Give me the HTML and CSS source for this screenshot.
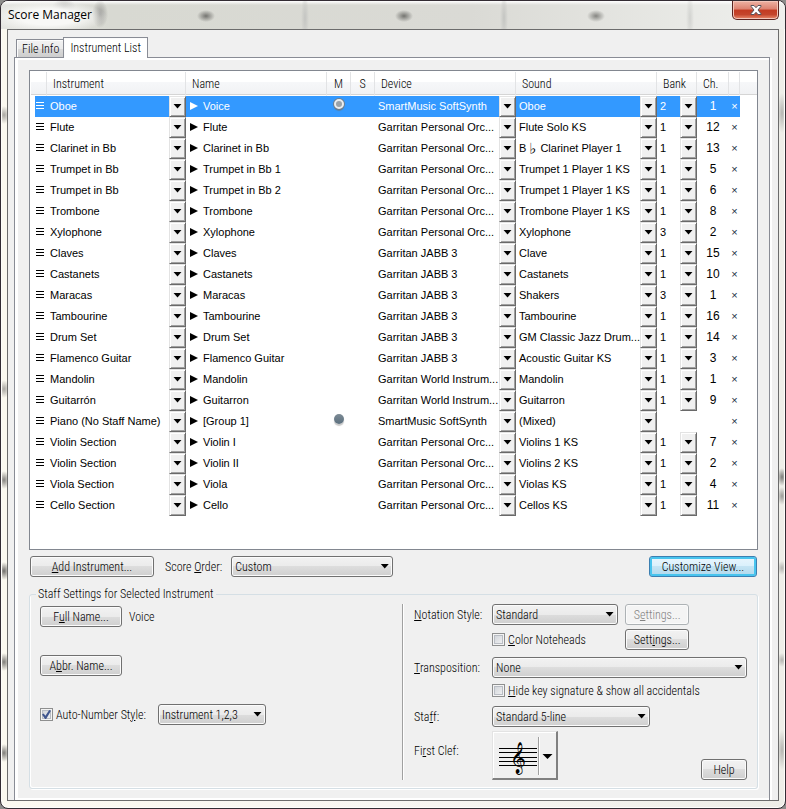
FILE: index.html
```html
<!DOCTYPE html>
<html lang="en">
<head>
<meta charset="utf-8">
<title>Score Manager</title>
<link rel="stylesheet" href="styles.css">
</head>
<body>
<div class="window">
  <header class="titlebar">
    <h1>Score Manager</h1>
    <button class="close" type="button" aria-label="Close">
      <svg width="12" height="12" viewBox="0 0 12 12"><path d="M1 1.5h3l2 2.2 2-2.2h3v.8L8 6l3 3.7v.8H8L6 8.3 4 10.500H1v-.8L4 6 1 2.300z" fill="#fff" stroke="#56545c" stroke-width="1"/></svg>
    </button>
  </header>

  <main class="client">
    <nav class="tabs" role="tablist">
      <button class="tab" type="button" role="tab">File Info</button>
      <button class="tab active" type="button" role="tab" aria-selected="true">Instrument List</button>
    </nav>

    <div class="page">
      <div class="list">
        <table>
          <colgroup>
            <col class="c-grip"><col class="c-inst"><col><col class="c-flag"><col class="c-flag"><col class="c-wide"><col class="c-wide"><col class="c-bank"><col class="c-ch"><col class="c-del"><col class="c-end">
          </colgroup>
          <thead>
            <tr><th></th><th>Instrument</th><th>Name</th><th class="mid">M</th><th class="mid">S</th><th>Device</th><th>Sound</th><th>Bank</th><th>Ch.</th><th></th><th></th></tr>
          </thead>
          <tbody id="rows"></tbody>
        </table>
      </div>

      <div class="actions">
        <button class="btn add" type="button"><u>A</u>dd Instrument...</button>
        <label for="order">Score <u>O</u>rder:</label>
        <span class="combo order"><select id="order"><option>Custom</option></select></span>
        <button class="btn customize" type="button">Customize View...</button>
      </div>

      <fieldset>
        <legend>Staff Settings for Selected Instrument</legend>
        <div class="columns">
          <div class="left">
            <div class="line"><button class="btn name" type="button">F<u>u</u>ll Name...</button><span class="value">Voice</span></div>
            <div class="line"><button class="btn name" type="button">A<u>b</u>br. Name...</button></div>
            <div class="line">
              <label class="check auto"><input type="checkbox" checked><span>Auto-Number St<u>y</u>le:</span></label>
              <span class="combo numbering"><select aria-label="Auto-Number Style"><option>Instrument 1,2,3</option></select></span>
            </div>
          </div>

          <div class="right">
            <div class="group">
              <label for="notation"><u>N</u>otation Style:</label>
              <div class="pair">
                <span class="combo"><select id="notation"><option>Standard</option></select></span>
                <button class="btn" type="button" disabled>S<u>e</u>ttings...</button>
              </div>
              <div class="pair field">
                <label class="check"><input type="checkbox"><span><u>C</u>olor Noteheads</span></label>
                <button class="btn" type="button">Sett<u>i</u>ngs...</button>
              </div>
            </div>
            <div class="group">
              <label for="transposition"><u>T</u>ransposition:</label>
              <span class="combo"><select id="transposition"><option>None</option></select></span>
              <label class="check field"><input type="checkbox"><span><u>H</u>ide key signature &amp; show all accidentals</span></label>
            </div>
            <div class="group">
              <label for="staff">Sta<u>f</u>f:</label>
              <span class="combo staff"><select id="staff"><option>Standard 5-line</option></select></span>
              <label class="clef-label" for="clef">Fi<u>r</u>st Clef:</label>
              <div class="clef-row">
                <button class="clef" id="clef" type="button">
                  <svg width="62" height="46" viewBox="493 732 62 46">
                    <path d="M499 748.5h38M499 752.500h38M499 757.500h38M499 761.500h38M499 765.500h38" stroke="#000"/>
                    <text class="glyph" x="518" y="767" text-anchor="middle">&#x1D11E;</text>
                    <path d="M538.500 737v38" stroke="#a0a0a0"/><path d="M539.500 737v38" stroke="#fff"/>
                    <path d="M542.500 754h10l-5 5z"/>
                  </svg>
                </button>
                <button class="btn help" type="button">Help</button>
              </div>
            </div>
          </div>
        </div>
      </fieldset>
    </div>
  </main>
</div>
<script src="rows.js"></script>
</body>
</html>
```
FILE: rows.js
```js
const GPO = 'Garritan Personal Orc...';
const JABB = 'Garritan JABB 3';
const WORLD = 'Garritan World Instrum...';
const SMART = 'SmartMusic SoftSynth';

// instrument, name, mute, device, sound, bank, channel
const rows = [
  ['Oboe', 'Voice', 'ring', SMART, 'Oboe', 2, 1],
  ['Flute', 'Flute', '', GPO, 'Flute Solo KS', 1, 12],
  ['Clarinet in Bb', 'Clarinet in Bb', '', GPO, 'B<span class="flat">♭</span>Clarinet Player 1', 1, 13],
  ['Trumpet in Bb', 'Trumpet in Bb 1', '', GPO, 'Trumpet 1 Player 1 KS', 1, 5],
  ['Trumpet in Bb', 'Trumpet in Bb 2', '', GPO, 'Trumpet 1 Player 1 KS', 1, 6],
  ['Trombone', 'Trombone', '', GPO, 'Trombone Player 1 KS', 1, 8],
  ['Xylophone', 'Xylophone', '', GPO, 'Xylophone', 3, 2],
  ['Claves', 'Claves', '', JABB, 'Clave', 1, 15],
  ['Castanets', 'Castanets', '', JABB, 'Castanets', 1, 10],
  ['Maracas', 'Maracas', '', JABB, 'Shakers', 3, 1],
  ['Tambourine', 'Tambourine', '', JABB, 'Tambourine', 1, 16],
  ['Drum Set', 'Drum Set', '', JABB, 'GM Classic Jazz Drum...', 1, 14],
  ['Flamenco Guitar', 'Flamenco Guitar', '', JABB, 'Acoustic Guitar KS', 1, 3],
  ['Mandolin', 'Mandolin', '', WORLD, 'Mandolin', 1, 1],
  ['Guitarrón', 'Guitarron', '', WORLD, 'Guitarron', 1, 9],
  ['Piano (No Staff Name)', '[Group 1]', 'solid', SMART, '(Mixed)', '', ''],
  ['Violin Section', 'Violin I', '', GPO, 'Violins 1 KS', 1, 7],
  ['Violin Section', 'Violin II', '', GPO, 'Violins 2 KS', 1, 2],
  ['Viola Section', 'Viola', '', GPO, 'Violas KS', 1, 4],
  ['Cello Section', 'Cello', '', GPO, 'Cellos KS', 1, 11],
];

const grip = '<svg class="grip" width="8" height="8" viewBox="0 0 8 8"><path d="M0 .5h8M0 3.5h8M0 6.5h8" stroke="currentColor"/></svg>';
const play = '<svg class="play" width="8" height="8" viewBox="0 0 8 8"><path d="M0 0l8 4-8 4z" fill="currentColor"/></svg>';

const pick = (text, label) =>
  `<div class="pick"><span>${text}</span><button class="drop" type="button" aria-label="${label}"></button></div>`;

document.getElementById('rows').innerHTML = rows.map(([inst, name, mute, device, sound, bank, ch], i) => `
  <tr class="${i === 0 ? 'selected' : ''}">
    <td class="handle">${grip}</td>
    <td>${pick(inst, 'Instrument')}</td>
    <td><div class="staff-name">${play}<span>${name}</span></div></td>
    <td>${mute ? `<i class="dot ${mute}"></i>` : ''}</td>
    <td></td>
    <td>${pick(device, 'Device')}</td>
    <td>${pick(sound, 'Sound')}</td>
    <td>${bank ? pick(bank, 'Bank') : ''}</td>
    <td class="ch">${ch}</td>
    <td class="del"><button type="button" aria-label="Delete">×</button></td>
    <td class="end"></td>
  </tr>`).join('');
```
FILE: styles.css
```css
* { box-sizing: border-box; }

body {
  margin: 0;
  background: #8d8d8b;
  color: #000;
  font: 300 12px/14px "Roboto Condensed", "Liberation Sans", sans-serif;
}

button, select, input { font: inherit; color: inherit; margin: 0; }
button { padding: 0; }

.window {
  min-height: 100vh;
  padding: 0 6px 6px;
  border: 1px solid #332c33;
  border-radius: 8px;
  background:
    radial-gradient(ellipse 6px 9px at 3px 114px, #a9a7a2, transparent),
    radial-gradient(ellipse 6px 9px at 3px 388px, #a9a7a2, transparent),
    radial-gradient(ellipse 6px 9px at 3px 479px, #85837f, transparent),
    radial-gradient(ellipse 6px 9px at 3px 570px, #6f6d6a, transparent),
    radial-gradient(ellipse 6px 9px at 3px 661px, #7f7d79, transparent),
    radial-gradient(ellipse 6px 9px at 3px 752px, #7f7d79, transparent),
    radial-gradient(ellipse 5px 20px at calc(100% - 3px) 112px, #b5b5b1, transparent),
    radial-gradient(ellipse 5px 9px at calc(100% - 3px) 476px, #7b7b78, transparent),
    radial-gradient(ellipse 5px 9px at calc(100% - 3px) 495px, #9b9b97, transparent),
    radial-gradient(ellipse 5px 7px at calc(100% - 3px) 567px, #b5b5b1, transparent),
    radial-gradient(ellipse 5px 7px at calc(100% - 3px) 659px, #b5b5b1, transparent),
    radial-gradient(ellipse 5px 20px at calc(100% - 3px) 749px, #b5b5b1, transparent),
    linear-gradient(90deg, #fbf9f0, #f8f6f2 50%, #eeeee8);
  box-shadow: inset 0 0 0 1px #fdfdfa;
}

.titlebar {
  display: flex;
  align-items: flex-start;
  justify-content: space-between;
  height: 28px;
  margin: 0 -6px;
  border-radius: 7px 7px 0 0;
  background:
    radial-gradient(ellipse 9px 6px at 205px 15px, #747470, transparent),
    radial-gradient(ellipse 9px 6px at 403px 15px, #747470, transparent),
    radial-gradient(ellipse 9px 6px at 595px 15px, #858581, transparent),
    radial-gradient(ellipse 4px 24px at 304px 17px, #c4c5c2, transparent),
    radial-gradient(ellipse 4px 24px at 503px 17px, #c4c5c2, transparent),
    radial-gradient(ellipse 4px 24px at 689px 17px, #d2d3d0, transparent),
    radial-gradient(ellipse 58px 16px at 48px 16px, #f8f8f6 50%, transparent),
    radial-gradient(ellipse 8px 14px at 99px 13px, #9b9b98, transparent),
    radial-gradient(ellipse 12px 8px at 63px 6px, #b7b7b4, transparent),
    linear-gradient(180deg, #fff 0, transparent 4px),
    linear-gradient(90deg, #e5e5e1, #d8d9d2 14%, #dadad5 60%, #eff0ed);
}

h1 {
  margin: 6px 0 0 7px;
  font: 12px/16px "Open Sans", "Noto Sans", sans-serif;
}

.close {
  display: flex;
  align-items: center;
  justify-content: center;
  width: 47px;
  height: 19px;
  margin-right: 6px;
  border: 1px solid #5b2420;
  border-top: 0;
  border-radius: 0 0 5px 5px;
  background: linear-gradient(#eeb3a4 0, #dc8170 45%, #c33b22 50%, #c4452c 75%, #ea8c6e);
  box-shadow: inset 0 0 0 1px #f3c5b9;
}

.client {
  padding: 7px 8px 0 6px;
  border: 1px solid #6c6c6c;
  background: #f0f0f0;
}

.tabs { display: flex; align-items: flex-end; height: 20px; padding-left: 2px; }

.tab {
  height: 18px;
  padding: 0 4px 0 5px;
  border: 1px solid #898c95;
  border-width: 1px 0 0 1px;
  background: linear-gradient(#f3f3f3, #ebebeb 50%, #dcdcdc 50%, #cdcdcd);
  box-shadow: inset 1px 1px #fcfcfc;
}

.tab.active {
  z-index: 1;
  height: 21px;
  margin-bottom: -1px;
  padding: 0 6px 1px;
  border-width: 1px 1px 0;
  background: #fff;
}

.page {
  padding: 10px 11px 9px;
  border: solid #fff;
  border-width: 2px 0 2px 3px;
  box-shadow: -1px 0 #898c95, 0 -1px #898c95, -1px -1px #898c95, 1px -1px #898c95, 1px 0 #898c95, 3px 0 #fff;
  margin: 1px 1px 0;
}

.list {
  padding: 1px 0 33px 1px;
  border: 1px solid #828790;
  background: #fff;
}

table {
  width: 100%;
  border-spacing: 0;
  table-layout: fixed;
  font: 11px/14px "Liberation Sans", Arial, sans-serif;
}

.c-grip { width: 16px; }
.c-inst { width: 139px; }
.c-flag { width: 24px; }
.c-wide { width: 141px; }
.c-bank { width: 40px; }
.c-ch { width: 32px; }
.c-del { width: 11px; }
.c-end { width: 17px; }

th {
  height: 24px;
  padding: 0 0 0 6px;
  border-right: 1px solid #e2e3e5;
  border-bottom: 1px solid #fff;
  background: linear-gradient(#fff 45%, #f6f7f9 45%, #f1f2f4 95%, #d5d5d5 96%);
  font: 300 12px/14px "Roboto Condensed", "Liberation Sans", sans-serif;
  text-align: left;
  white-space: nowrap;
}
th.mid { padding: 0; text-align: center; }
th:last-child { border-right: 0; }

td { height: 21px; padding: 0; white-space: nowrap; }
.selected { background: #3399ff; color: #fff; }
.handle { border-left: 4px solid #fff; }
.end { background: #fff; }
.grip, .play { display: block; flex: none; }
.grip { margin: 0 0 2px 1px; }

.pick { display: flex; align-items: center; height: 21px; padding-left: 3px; }
.pick > span { flex: 1; min-width: 0; padding-bottom: 2px; }
.flat { margin: 0 4px 0 3px; font: 15px/10px "DejaVu Sans"; vertical-align: -2px; }

.drop {
  display: grid;
  place-items: center;
  flex: none;
  width: 17px;
  height: 21px;
  border: solid;
  border-width: 1px;
  border-color: #e3e3e3 #696969 #696969 #e3e3e3;
  background: #f0f0f0;
  box-shadow: inset 1px 1px #fff, inset -1px -1px #a0a0a0;
}
.drop::after {
  content: "";
  width: 9px;
  height: 5px;
  background: #000;
  clip-path: polygon(6% 0, 94% 0, 50% 92%);
}

.staff-name { display: flex; align-items: center; gap: 5px; padding: 0 0 2px 4px; }

.dot { display: block; width: 10px; height: 10px; margin: -5px auto 0; border-radius: 50%; }
.dot.ring {
  border: 2px solid #e9ecee;
  background: #9aa2a8;
  box-shadow: 0 0 0 1px #6f7f8e, 0 2px 1px #5580a8;
}
.dot.solid { background: linear-gradient(#7d8b95, #5b6f7e); box-shadow: 0 2px 1px #c9c9c9; }

.ch { padding-bottom: 2px; font: 12px/14px "Liberation Sans", Arial, sans-serif; text-align: center; }
.del { padding-bottom: 1px; text-align: center; }
.del button { display: block; width: 100%; border: 0; background: none; color: #223044; font: inherit; }
.selected .del button { color: #fff; }

.actions { display: flex; align-items: center; margin: 6px 1px 10px; }
.actions label { margin: 0 9px 0 11px; }

.btn, .combo select {
  height: 21px;
  border: 1px solid #707070;
  border-radius: 3px;
  background: linear-gradient(#f2f2f2, #ebebeb 50%, #dddddd 50%, #cfcfcf);
  box-shadow: inset 0 0 0 1px #fbfbfb;
}
.btn:disabled { border-color: #adb2b5; background: #f4f4f4; color: #838383; }
.add { width: 124px; }
.customize {
  width: 108px;
  margin-left: auto;
  border-color: #3c7fb1;
  background: linear-gradient(#eaf6fd, #d9f0fc 50%, #c4e4f4 50%, #b0d8ec);
  box-shadow: inset 0 0 0 2px #48c4ee;
}
.name { width: 82px; }
.help { width: 46px; }

.combo { position: relative; display: block; }
.combo select {
  display: block;
  width: 100%;
  padding: 0 20px 0 3px;
  appearance: none;
}
.combo::after {
  content: "";
  position: absolute;
  top: 8px;
  right: 4px;
  width: 9px;
  height: 5px;
  background: #000;
  clip-path: polygon(6% 0, 94% 0, 50% 92%);
  pointer-events: none;
}
.order { width: 162px; }
.numbering { width: 108px; }
.staff { width: 158px; }

fieldset {
  min-width: 0;
  margin: 0;
  padding: 3px 10px 8px;
  border: 1px solid #d5dfe5;
  border-radius: 3px;
  box-shadow: inset 1px -1px #fff, 1px 1px #fff;
}
legend { height: 14px; margin-left: -4px; padding: 0 2px; }

.columns { display: grid; grid-template-columns: 21fr 20fr; }
.left { display: flex; flex-direction: column; gap: 28px; padding-top: 2px; }
.line { display: flex; align-items: center; min-height: 21px; }
.value { margin-left: 7px; }
.auto { width: 118px; }

.right {
  display: flex;
  flex-direction: column;
  gap: 7px;
  padding-left: 11px;
  border-left: 1px solid #a0a0a0;
  box-shadow: inset 1px 0 #fff;
}
.group { display: grid; grid-template-columns: 78px 1fr; row-gap: 4px; align-items: center; }
.field { grid-column: 2; }
.pair { display: grid; grid-template-columns: 126px 64px; column-gap: 7px; align-items: center; }

.check { display: flex; align-items: center; gap: 3px; min-height: 17px; white-space: nowrap; }
.check input {
  display: grid;
  place-items: center;
  flex: none;
  width: 13px;
  height: 13px;
  appearance: none;
  border: 1px solid #8e8f8f;
  background: linear-gradient(135deg, #cbcfd5, #f6f6f6);
  box-shadow: inset 0 0 0 1px #f4f4f4, inset 0 0 0 2px #b9bdc4;
}
.check input:checked::after {
  content: "";
  width: 9px;
  height: 9px;
  background: #40568f;
  clip-path: polygon(0 50%, 18% 38%, 38% 64%, 80% 0, 100% 8%, 46% 100%, 34% 100%);
}

.clef-label { align-self: start; line-height: 40px; }
.clef-row { display: flex; align-items: flex-end; justify-content: space-between; }
.clef {
  width: 66px;
  height: 49px;
  border: solid;
  border-width: 1px 2px 2px 1px;
  border-color: #e3e3e3 #808080 #808080 #e3e3e3;
  background: #f0f0f0;
  box-shadow: inset 1px 1px #fff;
}
.clef svg { display: block; }
.glyph { font: 27px "DejaVu Sans"; }
```
